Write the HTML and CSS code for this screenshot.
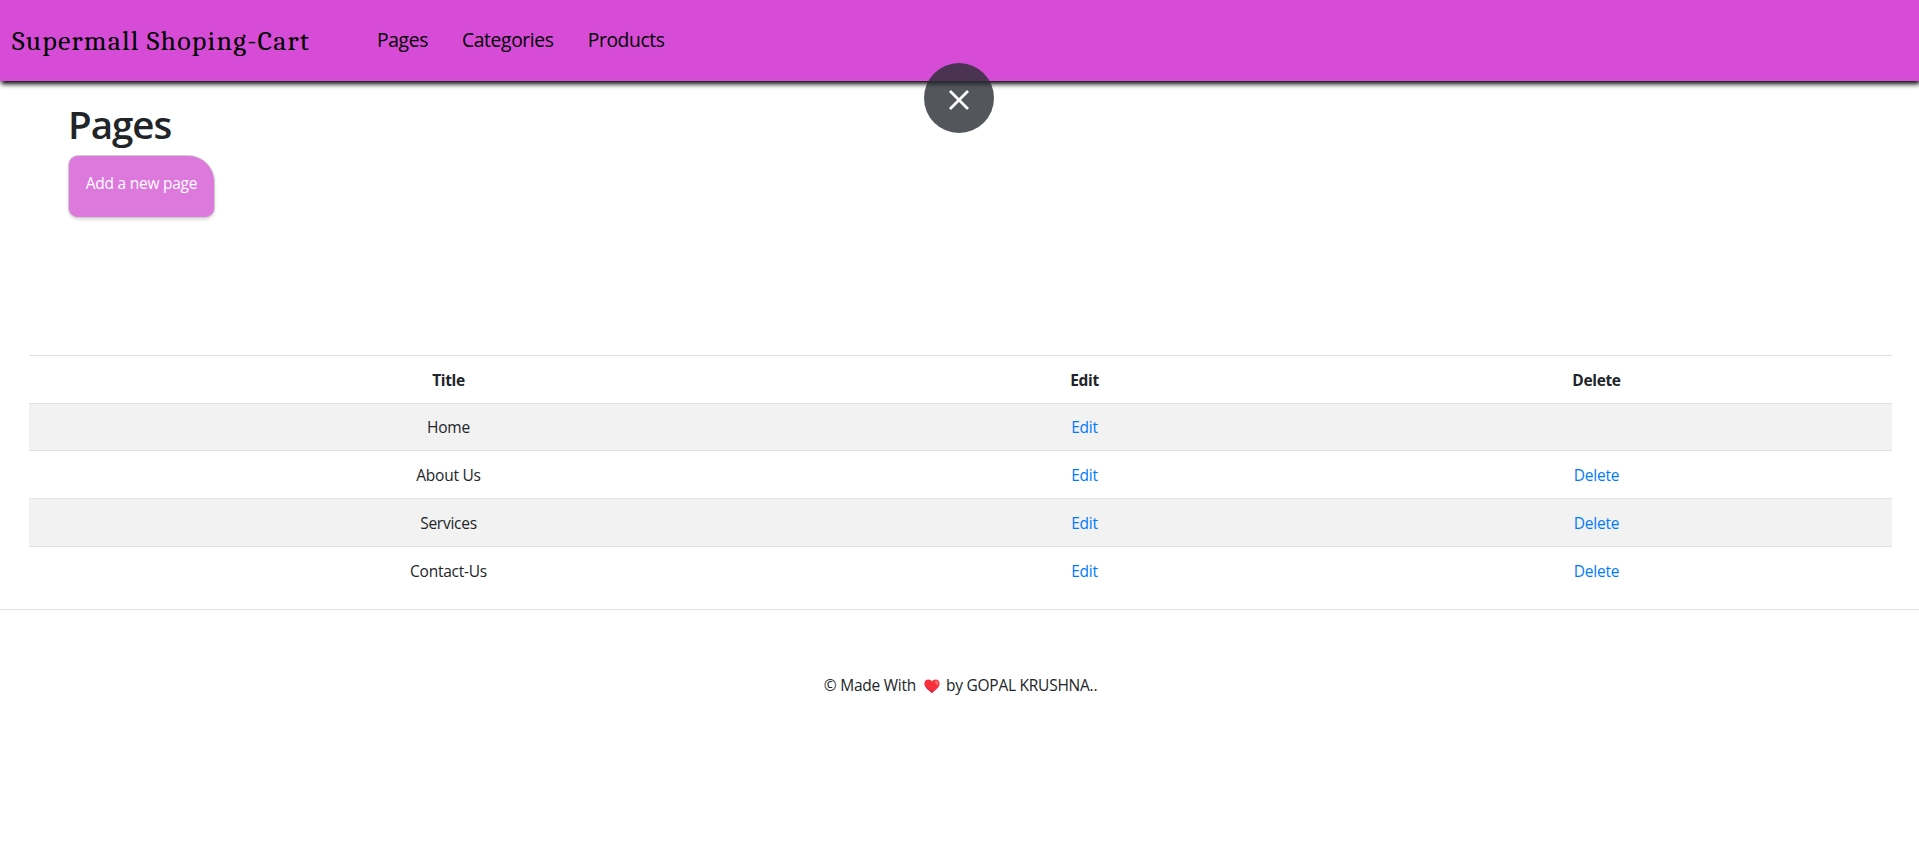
FILE: index.html
```html
<!DOCTYPE html>
<html lang="en">
<head>
<meta charset="utf-8">
<title>Supermall Shoping-Cart</title>
<link rel="stylesheet" href="styles.css">
</head>
<body>
<nav class="navbar">
  <a class="brand" href="#">Supermall Shoping-Cart</a>
  <ul class="nav-links">
    <li><a href="#">Pages</a></li>
    <li><a href="#">Categories</a></li>
    <li><a href="#">Products</a></li>
  </ul>
</nav>
<button class="close" aria-label="Close">
  <svg width="20" height="20" viewBox="0 0 20 20"><path d="M1 1L19 19M19 1L1 19" stroke="#fff" stroke-width="2.7" fill="none"/></svg>
</button>
<main>
  <header class="page-head">
    <h1>Pages</h1>
    <a class="add-button" href="#"><span>Add a new page</span></a>
  </header>
  <table class="pages-table">
    <colgroup><col class="col-title"><col class="col-edit"><col class="col-delete"></colgroup>
    <thead><tr><th>Title</th><th>Edit</th><th>Delete</th></tr></thead>
    <tbody>
      <tr class="short"><td>Home</td><td><a href="#">Edit</a></td><td></td></tr>
      <tr><td>About Us</td><td><a href="#">Edit</a></td><td><a href="#">Delete</a></td></tr>
      <tr><td>Services</td><td><a href="#">Edit</a></td><td><a href="#">Delete</a></td></tr>
      <tr><td>Contact-Us</td><td><a href="#">Edit</a></td><td><a href="#">Delete</a></td></tr>
    </tbody>
  </table>
</main>
<footer class="footer">
  <span class="made">© Made With</span>
  <svg class="heart" width="16" height="14" viewBox="0 0 16 14"><path d="M8 14C5 11.6.4 8.500.4 4.500C.4 1.800 2.200.4 4.300.4C6 .4 7.300 1.300 8 2.600C8.700 1.300 10 .4 11.700.4C13.800.4 15.600 1.800 15.600 4.500C15.600 8.500 11 11.600 8 14Z" fill="#f92f3c"/><ellipse cx="12.600" cy="3.600" rx="1.500" ry="2.200" transform="rotate(-35 12.600 3.600)" fill="#fb7070"/><path d="M.5 5C1 8.500 5 11.500 8 14L9.500 12.800C5.500 11 2 8.500.5 5Z" fill="#ca2a4c"/></svg>
  <span class="author">by GOPAL KRUSHNA..</span>
</footer>
</body>
</html>
```
FILE: styles.css
```css
* { box-sizing: border-box; }
body {
  margin: 0;
  background: #fff;
  color: #212529;
  font-family: "Open Sans", "Noto Sans", sans-serif;
  font-size: 15.5px;
  line-height: 24px;
  letter-spacing: -0.25px;
}
a { color: #007bff; text-decoration: none; }
.navbar {
  display: flex;
  align-items: center;
  height: 81px;
  padding-left: 12px;
  background: #d64cd6;
  box-shadow: 1px 3px 5px #000;
}
.brand {
  width: 365px;
  color: #000;
  font-family: Cambria, Caladea, "Liberation Serif", serif;
  font-size: 28px;
  line-height: 36px;
  letter-spacing: 1.15px;
  white-space: nowrap;
}
.nav-links {
  display: flex;
  gap: 34px;
  margin: 0;
  padding: 0 0 2px;
  list-style: none;
  font-size: 19.3px;
  line-height: 30px;
  letter-spacing: -0.37px;
}
.nav-links a { color: #000; }
.close {
  position: absolute;
  left: 924px;
  top: 63px;
  display: flex;
  align-items: center;
  justify-content: center;
  width: 70px;
  height: 70px;
  padding: 3px 0 0;
  border: 0;
  border-radius: 50%;
  background: rgba(40, 45, 51, 0.8);
}
.page-head { height: 274px; padding: 19px 68px 0; }
h1 {
  margin: 0 0 7px;
  font-size: 38.5px;
  font-weight: 600;
  line-height: 48px;
  letter-spacing: -1px;
}
.add-button {
  display: inline-flex;
  justify-content: center;
  width: 147px;
  height: 63px;
  padding-top: 15px;
  border: 1px solid #ccc;
  border-radius: 10px 27px 10px 10px;
  background: #dd78dd;
  box-shadow: 0 2px 3px rgba(0, 0, 0, 0.12);
  color: #fff;
}
.pages-table {
  width: 1863px;
  margin-left: 29px;
  border-spacing: 0;
  table-layout: fixed;
  text-align: center;
}
.col-title { width: 839px; }
.col-edit { width: 433px; }
.col-delete { width: 591px; }
.pages-table tr { height: 48px; }
.pages-table .short { height: 47px; }
.pages-table th, .pages-table td {
  padding: 0;
  border-top: 1px solid #dee2e6;
}
.pages-table th { font-weight: 700; letter-spacing: -0.35px; }
.pages-table tbody tr:nth-child(odd) { background: #f2f2f2; }
.footer {
  display: flex;
  align-items: center;
  justify-content: center;
  margin-top: 15px;
  padding: 63px 0 0 2px;
  border-top: 1px solid #e2e2e2;
}
.heart { margin: 2px 6px 0 8px; }
```
